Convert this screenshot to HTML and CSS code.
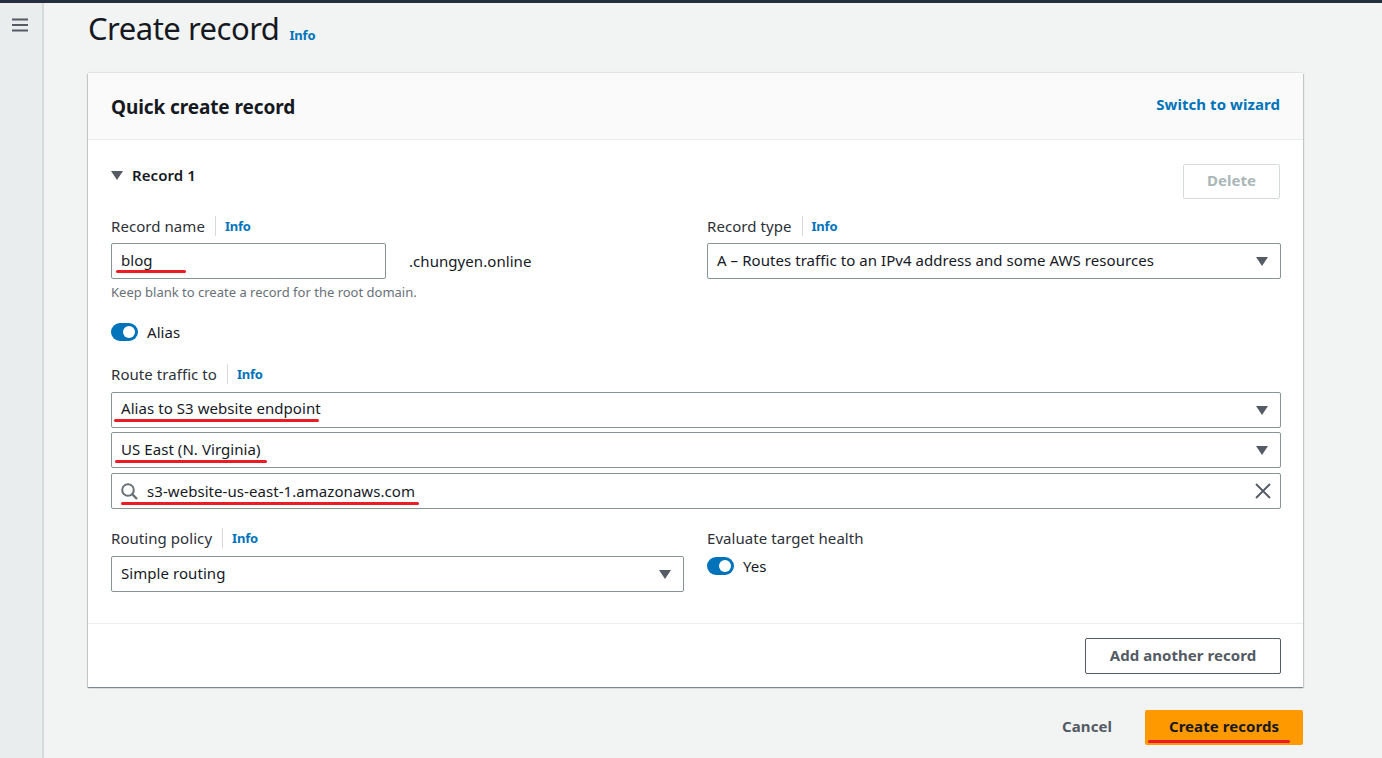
FILE: index.html
```html
<!DOCTYPE html>
<html lang="en">
<head>
    <meta charset="UTF-8">
    <meta name="viewport" content="width=device-width, initial-scale=1.0">
    <title>Create record</title>
    <link rel="stylesheet" href="styles.css">
</head>
<body>
    <div class="topbar"></div>
    <div class="layout">
        <aside class="sidebar">
            <svg class="menu-icon" width="16" height="14" viewBox="0 0 16 14"><path d="M0 1.5h16M0 7h16M0 12.5h16" stroke="#545b64" stroke-width="2" fill="none"/></svg>
        </aside>
        <main class="main">
            <div class="page-title">
                <h1>Create record</h1>
                <a class="info">Info</a>
            </div>

            <section class="card">
                <header class="card-header">
                    <h2>Quick create record</h2>
                    <a class="wizard-link">Switch to wizard</a>
                </header>

                <div class="card-body">
                    <div class="record-head">
                        <div class="record-title">
                            <svg width="12" height="9" viewBox="0 0 12 9"><path d="M0 0h12L6 9z" fill="#545b64"/></svg>
                            <span>Record 1</span>
                        </div>
                        <div class="button button-disabled">Delete</div>
                    </div>

                    <div class="columns columns-name">
                        <div>
                            <div class="label"><span>Record name</span><a class="info">Info</a></div>
                            <div class="name-row">
                                <div class="control control-name">blog<span class="mark mark-blog"></span></div>
                                <span class="domain">.chungyen.online</span>
                            </div>
                            <div class="hint">Keep blank to create a record for the root domain.</div>
                        </div>
                        <div>
                            <div class="label"><span>Record type</span><a class="info">Info</a></div>
                            <div class="control">
                                A – Routes traffic to an IPv4 address and some AWS resources
                                <svg class="caret" width="12" height="9" viewBox="0 0 12 9"><path d="M0 0h12L6 9z" fill="#545b64"/></svg>
                            </div>
                        </div>
                    </div>

                    <div class="toggle-row toggle-alias">
                        <span class="toggle"></span>
                        <span>Alias</span>
                    </div>

                    <div class="label label-route"><span>Route traffic to</span><a class="info">Info</a></div>
                    <div class="control control-alias">
                        Alias to S3 website endpoint<span class="mark mark-alias"></span>
                        <svg class="caret" width="12" height="9" viewBox="0 0 12 9"><path d="M0 0h12L6 9z" fill="#545b64"/></svg>
                    </div>
                    <div class="control control-region">
                        US East (N. Virginia)<span class="mark mark-region"></span>
                        <svg class="caret" width="12" height="9" viewBox="0 0 12 9"><path d="M0 0h12L6 9z" fill="#545b64"/></svg>
                    </div>
                    <div class="control control-search">
                        <svg class="search-icon" width="17" height="17" viewBox="0 0 17 17"><circle cx="7" cy="7" r="5.8" stroke="#687078" stroke-width="2" fill="none"/><path d="M11 11l5 5" stroke="#687078" stroke-width="2.4" fill="none"/></svg>
                        s3-website-us-east-1.amazonaws.com<span class="mark mark-search"></span>
                        <svg class="clear-icon" width="16" height="16" viewBox="0 0 16 16"><path d="M1 1l14 14M15 1L1 15" stroke="#545b64" stroke-width="1.8" fill="none"/></svg>
                    </div>

                    <div class="columns columns-policy">
                        <div>
                            <div class="label"><span>Routing policy</span><a class="info">Info</a></div>
                            <div class="control">
                                Simple routing
                                <svg class="caret" width="12" height="9" viewBox="0 0 12 9"><path d="M0 0h12L6 9z" fill="#545b64"/></svg>
                            </div>
                        </div>
                        <div>
                            <div class="label label-plain"><span>Evaluate target health</span></div>
                            <div class="toggle-row toggle-yes">
                                <span class="toggle"></span>
                                <span>Yes</span>
                            </div>
                        </div>
                    </div>
                </div>

                <footer class="card-footer">
                    <div class="button button-normal">Add another record</div>
                </footer>
            </section>

            <div class="actions">
                <a class="cancel">Cancel</a>
                <div class="button button-primary">Create records<span class="mark mark-create"></span></div>
            </div>
        </main>
    </div>
</body>
</html>
```

FILE: styles.css
```css
html, body {
    height: 100%;
}
body {
    margin: 0;
    overflow: hidden;
    background-color: #f2f3f3;
    color: #16191f;
    font-family: "Noto Sans", Arial, sans-serif;
    font-size: 15px;
    line-height: 20px;
    letter-spacing: 0.06px;
}
h1, h2 {
    margin: 0;
}
a {
    cursor: pointer;
}
.topbar {
    height: 3px;
    background-color: #232f3e;
}
.layout {
    display: flex;
    height: 755px;
}
.sidebar {
    flex: none;
    box-sizing: border-box;
    width: 44px;
    padding: 15px 0 0 12px;
    background-color: #eaeded;
    border-right: 2px solid #d5dbdb;
}
.menu-icon {
    display: block;
}
.main {
    flex: none;
    box-sizing: border-box;
    width: 1259px;
    padding-left: 44px;
}
.page-title {
    display: flex;
    align-items: baseline;
    gap: 10px;
    height: 70px;
}
.page-title h1 {
    font-size: 31px;
    font-weight: 400;
    line-height: 50px;
    letter-spacing: -0.5px;
}
.info {
    color: #0073bb;
    font-size: 13px;
    font-weight: 700;
    letter-spacing: -0.2px;
}
.card {
    background-color: #fff;
    box-shadow: 0 1px 1px 0 rgba(0, 28, 36, 0.3), 1px 1px 1px 0 rgba(0, 28, 36, 0.15), -1px 1px 1px 0 rgba(0, 28, 36, 0.15), 0 -1px 1px 0 rgba(0, 28, 36, 0.06);
}
.card-header {
    display: flex;
    justify-content: space-between;
    align-items: center;
    box-sizing: border-box;
    height: 67px;
    padding: 2px 23px 0;
    background-color: #fafafa;
    border-bottom: 1px solid #eaeded;
}
.card-header h2 {
    font-size: 19px;
    font-weight: 700;
    letter-spacing: -0.1px;
}
.wizard-link {
    color: #0073bb;
    font-weight: 700;
    margin-bottom: 7px;
}
.card-body {
    padding: 23px 22px 0 23px;
    height: 483px;
    box-sizing: border-box;
}
.record-head {
    display: flex;
    justify-content: space-between;
    align-items: flex-start;
    height: 53px;
}
.record-title {
    display: flex;
    align-items: center;
    gap: 9px;
    font-weight: 600;
    height: 24px;
}
.button {
    box-sizing: border-box;
    display: flex;
    align-items: center;
    justify-content: center;
    height: 36px;
    padding-bottom: 3px;
    border-radius: 2px;
    font-weight: 700;
    position: relative;
}
.button-disabled {
    width: 97px;
    height: 35px;
    margin-top: 1px;
    margin-right: 1px;
    color: #aab7b8;
    border: 1px solid #d5dbdb;
}
.button-normal {
    width: 196px;
    color: #545b64;
    border: 1px solid #545b64;
    background-color: #fff;
}
.button-primary {
    width: 158px;
    height: 35px;
    color: #16191f;
    background-color: #ff9900;
}
.columns {
    display: grid;
    grid-template-columns: 573px 574px;
    gap: 23px;
}
.label {
    display: flex;
    align-items: center;
    height: 20px;
    margin-bottom: 7px;
    color: #16191f;
}
.label span {
    padding-right: 10px;
    border-right: 1px solid #d5dbdb;
    color: #2d3138;
}
.label .info {
    margin-left: 9px;
}
.label-plain span {
    border-right: none;
}
.control {
    position: relative;
    box-sizing: border-box;
    display: flex;
    align-items: center;
    height: 36px;
    padding: 0 9px 2px;
    background-color: #fff;
    border: 1px solid #879596;
    border-radius: 2px;
    white-space: nowrap;
}
.control-alias {
    padding-bottom: 4px;
}
.caret {
    position: absolute;
    right: 12px;
    top: 13px;
}
.name-row {
    display: flex;
    align-items: center;
}
.control-name {
    width: 275px;
}
.domain {
    margin-left: 23px;
}
.hint {
    margin-top: 3px;
    color: #687078;
    font-size: 13px;
    line-height: 20px;
    letter-spacing: 0;
}
.toggle-row {
    display: flex;
    align-items: center;
    gap: 9px;
    height: 20px;
}
.toggle-alias {
    margin-top: 20px;
}
.toggle-yes {
    margin-top: 3px;
}
.toggle {
    position: relative;
    display: block;
    width: 27px;
    height: 18px;
    border-radius: 9px;
    background-color: #0073bb;
}
.toggle::after {
    content: "";
    position: absolute;
    right: 3px;
    top: 3px;
    width: 12px;
    height: 12px;
    border-radius: 50%;
    background-color: #fff;
}
.label-route {
    margin-top: 22px;
    margin-bottom: 8px;
}
.control-region {
    margin-top: 4px;
}
.control-search {
    margin-top: 5px;
    padding-left: 9px;
    padding-bottom: 0;
}
.search-icon {
    margin-right: 9px;
    flex: none;
}
.clear-icon {
    position: absolute;
    right: 9px;
    top: 9px;
}
.columns-policy {
    margin-top: 19px;
}
.columns-policy .label {
    margin-bottom: 8px;
}
.card-footer {
    display: flex;
    justify-content: flex-end;
    align-items: flex-start;
    box-sizing: border-box;
    height: 64px;
    padding: 14px 22px 0 0;
    border-top: 1px solid #eaeded;
}
.actions {
    display: flex;
    justify-content: flex-end;
    align-items: center;
    gap: 33px;
    margin-top: 23px;
}
.cancel {
    color: #545b64;
    font-weight: 700;
    margin-bottom: 3px;
}
/* red annotation strokes drawn over the screenshot */
.mark {
    position: absolute;
    height: 3px;
    border-radius: 2px;
    background-color: #ec1c24;
}
.mark-blog {
    left: 4px;
    top: 26px;
    width: 70px;
}
.mark-alias {
    left: 2px;
    top: 26px;
    width: 205px;
}
.mark-region {
    left: 3px;
    top: 27px;
    width: 152px;
}
.mark-search {
    left: 9px;
    top: 28px;
    width: 298px;
}
.mark-create {
    left: 3px;
    top: 30px;
    width: 142px;
}
```
